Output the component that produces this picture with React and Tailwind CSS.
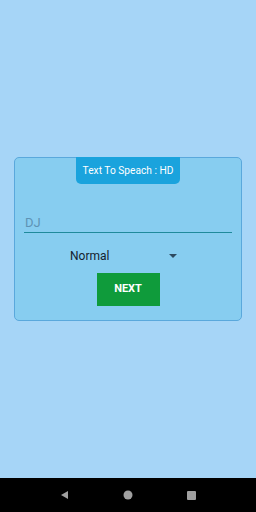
export default function App() {
  return (
    <div className="w-[256px] h-[512px] flex flex-col bg-[#a6d5f7]" style={{ fontFamily: 'Roboto, "Liberation Sans", sans-serif' }}>
      <div className="flex-1 flex items-center justify-center">
        <div className="w-[228px] h-[164px] bg-[#87cdf0] border border-[#5aa8dc] rounded-[5px] flex flex-col items-center">
          <div className="w-[104px] h-[27px] -mt-[1px] bg-[#1aa3dd] rounded-b-[5px] flex items-center justify-center text-white text-[10.2px]">
            Text To Speach : HD
          </div>
          <div className="w-full px-[9px] mt-[30px]">
            <div className="h-[19px] border-b-[1.5px] border-[#1f8a9c] text-[13px] leading-[18px] text-[#5e93b5] pl-[1px]">
              DJ
            </div>
          </div>
          <div className="w-[112px] h-[22px] mt-[12px] ml-[-4px] flex items-center justify-between">
            <span className="text-[12px] text-[#14222e]">Normal</span>
            <svg width="8" height="4" viewBox="0 0 8 4" className="mr-[5px]">
              <path d="M0 0 L8 0 L4 4 Z" fill="#2d4a60" />
            </svg>
          </div>
          <div className="w-[63px] h-[33px] mt-[6px] bg-[#0f9b3b] flex items-center justify-center text-white text-[11px] font-bold">
            NEXT
          </div>
        </div>
      </div>
      <div className="h-[34px] bg-black flex items-center justify-center gap-[54px]">
        <svg width="9" height="10" viewBox="0 0 9 10">
          <path d="M8 1 L8 9 L1 5 Z" fill="#a0a0a0" />
        </svg>
        <svg width="10" height="10" viewBox="0 0 10 10">
          <circle cx="5" cy="5" r="4.5" fill="#a0a0a0" />
        </svg>
        <svg width="9" height="9" viewBox="0 0 9 9">
          <rect x="0" y="0" width="9" height="9" rx="1" fill="#a0a0a0" />
        </svg>
      </div>
    </div>
  );
}
